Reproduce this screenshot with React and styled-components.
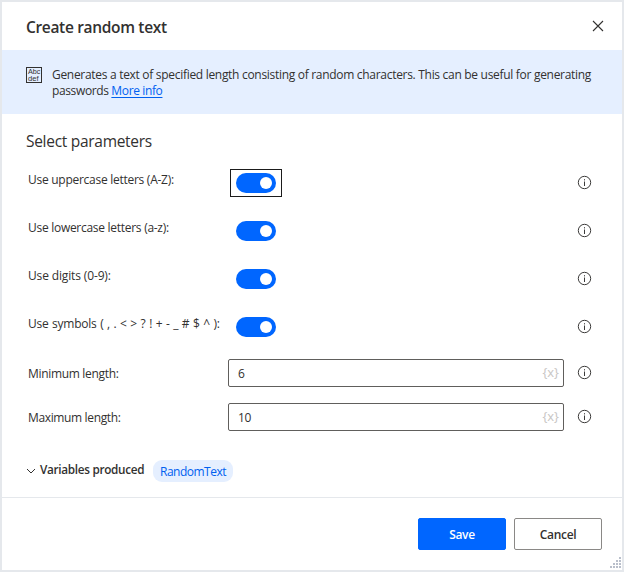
import React, { useState } from "react";
import styled, { createGlobalStyle } from "styled-components";

const GlobalStyle = createGlobalStyle`
  *, *::before, *::after { box-sizing: border-box; }
  body { margin: 0; background: #fff; }
`;

const Dialog = styled.div`
  position: relative;
  display: flex;
  flex-direction: column;
  width: 624px;
  height: 572px;
  border: 2px solid #e5e8ec;
  background: #fff;
  color: #323130;
  font: 12px/16px "Open Sans", "Noto Sans", sans-serif;
`;

const Text = styled.span`
  display: block;
  white-space: nowrap;
  font-size: ${(p) => p.$size || 12}px;
  letter-spacing: ${(p) => p.$track || 0}px;
  word-spacing: ${(p) => p.$words || 0}px;
`;

const Header = styled.header`
  display: flex;
  justify-content: space-between;
  height: 48px;
  padding: 14px 18px 0 24px;
`;

const Title = styled(Text).attrs({ as: "h1" })`
  margin: 0;
  font-weight: 600;
  line-height: 22px;
`;

const CloseButton = styled.button`
  width: 12px;
  height: 12px;
  margin-top: 4px;
  padding: 0;
  border: 0;
  background: none;
  svg { display: block; }
`;

const Banner = styled.section`
  display: flex;
  gap: 10px;
  height: 64px;
  padding: 17px 24px 0;
  background: #e5efff;
`;

const BannerIcon = styled.svg`
  flex: none;
  width: 16px;
  height: 16px;
`;

const Link = styled.a`
  color: #0060f0;
  text-decoration: underline;
  text-underline-offset: 2px;
`;

const Body = styled.main`
  height: 384px;
  border-bottom: 1px solid #e5e8ec;
`;

const SectionTitle = styled(Text).attrs({ as: "h2" })`
  margin: 0;
  padding: 16px 24px 0;
  height: 45px;
  font-weight: 400;
  line-height: 22px;
`;

const Row = styled.div`
  display: grid;
  grid-template-columns: 200px 336px 28px;
  height: ${(p) => p.$height}px;
  padding-left: 26px;
`;

const Label = styled(Text)`
  padding-top: ${(p) => p.$top}px;
`;

const InfoSlot = styled.svg`
  width: 14px;
  height: 14px;
  margin: ${(p) => p.$top}px 0 0 14px;
  overflow: visible;
`;

const ToggleBox = styled.div`
  width: 52px;
  height: 28px;
  margin: 10px 0 0 2px;
  padding: 3px 5px;
  border: 1px solid ${(p) => (p.$focused ? "#1b1b1b" : "transparent")};
`;

const Toggle = styled.button`
  display: flex;
  align-items: center;
  justify-content: ${(p) => (p.$on ? "flex-end" : "flex-start")};
  width: 40px;
  height: 20px;
  padding: 0 4px;
  border: 0;
  border-radius: 10px;
  background: ${(p) => (p.$on ? "#0066ff" : "#8a8886")};
`;

const Knob = styled.span`
  width: 12px;
  height: 12px;
  border-radius: 50%;
  background: #fff;
`;

const Field = styled.div`
  display: flex;
  align-items: center;
  width: 336px;
  height: 28px;
  padding: 0 4px 0 9px;
  border: 1px solid #605e5c;
  border-radius: 2px;
`;

const FieldInput = styled.input`
  flex: 1;
  min-width: 0;
  padding: 1px 0 0;
  border: 0;
  outline: 0;
  background: none;
  color: inherit;
  font: inherit;
  letter-spacing: -0.3px;
`;

const VariableHint = styled(Text)`
  padding-bottom: 2px;
  color: #c8c6c4;
`;

const Fields = styled.div`
  padding-top: 8px;
`;

const Variables = styled.div`
  display: flex;
  padding: 13px 24px 0;
`;

const Chevron = styled.svg`
  width: 10px;
  height: 6px;
  margin: 8px 4px 0 0;
`;

const VariablesTitle = styled(Text)`
  width: 113px;
  padding-top: 1px;
  font-weight: 600;
`;

const Chip = styled.div`
  width: 80px;
  height: 22px;
  padding: 4px 0 0 7px;
  border-radius: 9px;
  background: #e5efff;
  color: #0060f0;
`;

const Footer = styled.footer`
  display: flex;
  justify-content: flex-end;
  gap: 8px;
  padding: 20px 20px 0;
`;

const Button = styled.button`
  display: flex;
  align-items: center;
  justify-content: center;
  width: 88px;
  height: 32px;
  padding: 1px 0 0;
  border: 1px solid ${(p) => (p.$primary ? "#0066ff" : "#8a8886")};
  border-radius: 2px;
  background: ${(p) => (p.$primary ? "#0066ff" : "#fff")};
  color: ${(p) => (p.$primary ? "#fff" : "#323130")};
  font: 600 12px/16px "Open Sans", "Noto Sans", sans-serif;
  letter-spacing: -0.3px;
`;

const Grip = styled.svg`
  position: absolute;
  right: 0;
  bottom: 1px;
  width: 12px;
  height: 12px;
`;

const Info = ({ top }) => (
  <InfoSlot $top={top} viewBox="0 0 14 14" fill="none">
    <circle cx="6.5" cy="6.5" r="6.2" stroke="#3b3a39" />
    <path d="M6.5 5.5V10M6.5 3.2V4.4" stroke="#3b3a39" />
  </InfoSlot>
);

const ToggleRow = ({ label, track, words, focused }) => {
  const [on, setOn] = useState(true);
  return (
    <Row $height={48}>
      <Label $top={13} $track={track} $words={words}>{label}</Label>
      <ToggleBox $focused={focused}>
        <Toggle $on={on} role="switch" aria-checked={on} aria-label={label} onClick={() => setOn(!on)}>
          <Knob />
        </Toggle>
      </ToggleBox>
      <Info top={17} />
    </Row>
  );
};

const FieldRow = ({ label, track, value }) => (
  <Row $height={44}>
    <Label $top={7} $track={track}>{label}</Label>
    <Field>
      <FieldInput defaultValue={value} aria-label={label} />
      <VariableHint $size={13}>{"{x}"}</VariableHint>
    </Field>
    <Info top={7} />
  </Row>
);

const gripDots = [[9, 0], [6, 3], [9, 3], [3, 6], [6, 6], [9, 6], [0, 9], [3, 9], [6, 9], [9, 9]];

export default function App() {
  return (
    <>
      <GlobalStyle />
      <Dialog role="dialog">
        <Header>
          <Title $size={15.5} $track={-0.33}>Create random text</Title>
          <CloseButton aria-label="Close">
            <svg width="12" height="12" viewBox="0 0 12 12">
              <path d="M1 1L11 11M11 1L1 11" stroke="#323130" strokeWidth="1.1" />
            </svg>
          </CloseButton>
        </Header>
        <Banner>
          <BannerIcon viewBox="0 0 16 16">
            <rect x=".5" y=".5" width="15" height="15" fill="none" stroke="#323130" />
            <text x="2" y="7.3" fontSize="7" textLength="12.5" lengthAdjust="spacingAndGlyphs" fontFamily="Liberation Sans, sans-serif" fill="#323130">Abc</text>
            <text x="2" y="14" fontSize="7" textLength="10.5" lengthAdjust="spacingAndGlyphs" fontFamily="Liberation Sans, sans-serif" fill="#323130">def</text>
          </BannerIcon>
          <div>
            <Text $track={-0.3}>Generates a text of specified length consisting of random characters. This can be useful for generating</Text>
            <Text $track={-0.37}>passwords <Link>More info</Link></Text>
          </div>
        </Banner>
        <Body>
          <SectionTitle $size={15.5} $track={-0.29}>Select parameters</SectionTitle>
          <ToggleRow label="Use uppercase letters (A-Z):" track={-0.27} focused />
          <ToggleRow label="Use lowercase letters (a-z):" track={-0.28} />
          <ToggleRow label="Use digits (0-9):" track={-0.14} />
          <ToggleRow label="Use symbols ( , . < > ? ! + - _ # $ ^ ):" track={-0.25} words={0.77} />
          <Fields>
            <FieldRow label="Minimum length:" track={-0.32} value="6" />
            <FieldRow label="Maximum length:" track={-0.36} value="10" />
          </Fields>
          <Variables>
            <Chevron viewBox="0 0 10 6" fill="none">
              <path d="M1 1L5 5L9 1" stroke="#323130" />
            </Chevron>
            <VariablesTitle $size={11.75} $track={-0.3}>Variables produced</VariablesTitle>
            <Chip><Text $track={-0.5}>RandomText</Text></Chip>
          </Variables>
        </Body>
        <Footer>
          <Button $primary>Save</Button>
          <Button>Cancel</Button>
        </Footer>
        <Grip viewBox="0 0 12 12">
          {gripDots.map(([x, y]) => (
            <rect key={`${x}-${y}`} x={x} y={y} width="2" height="2" fill="#b9bfcb" />
          ))}
        </Grip>
      </Dialog>
    </>
  );
}
